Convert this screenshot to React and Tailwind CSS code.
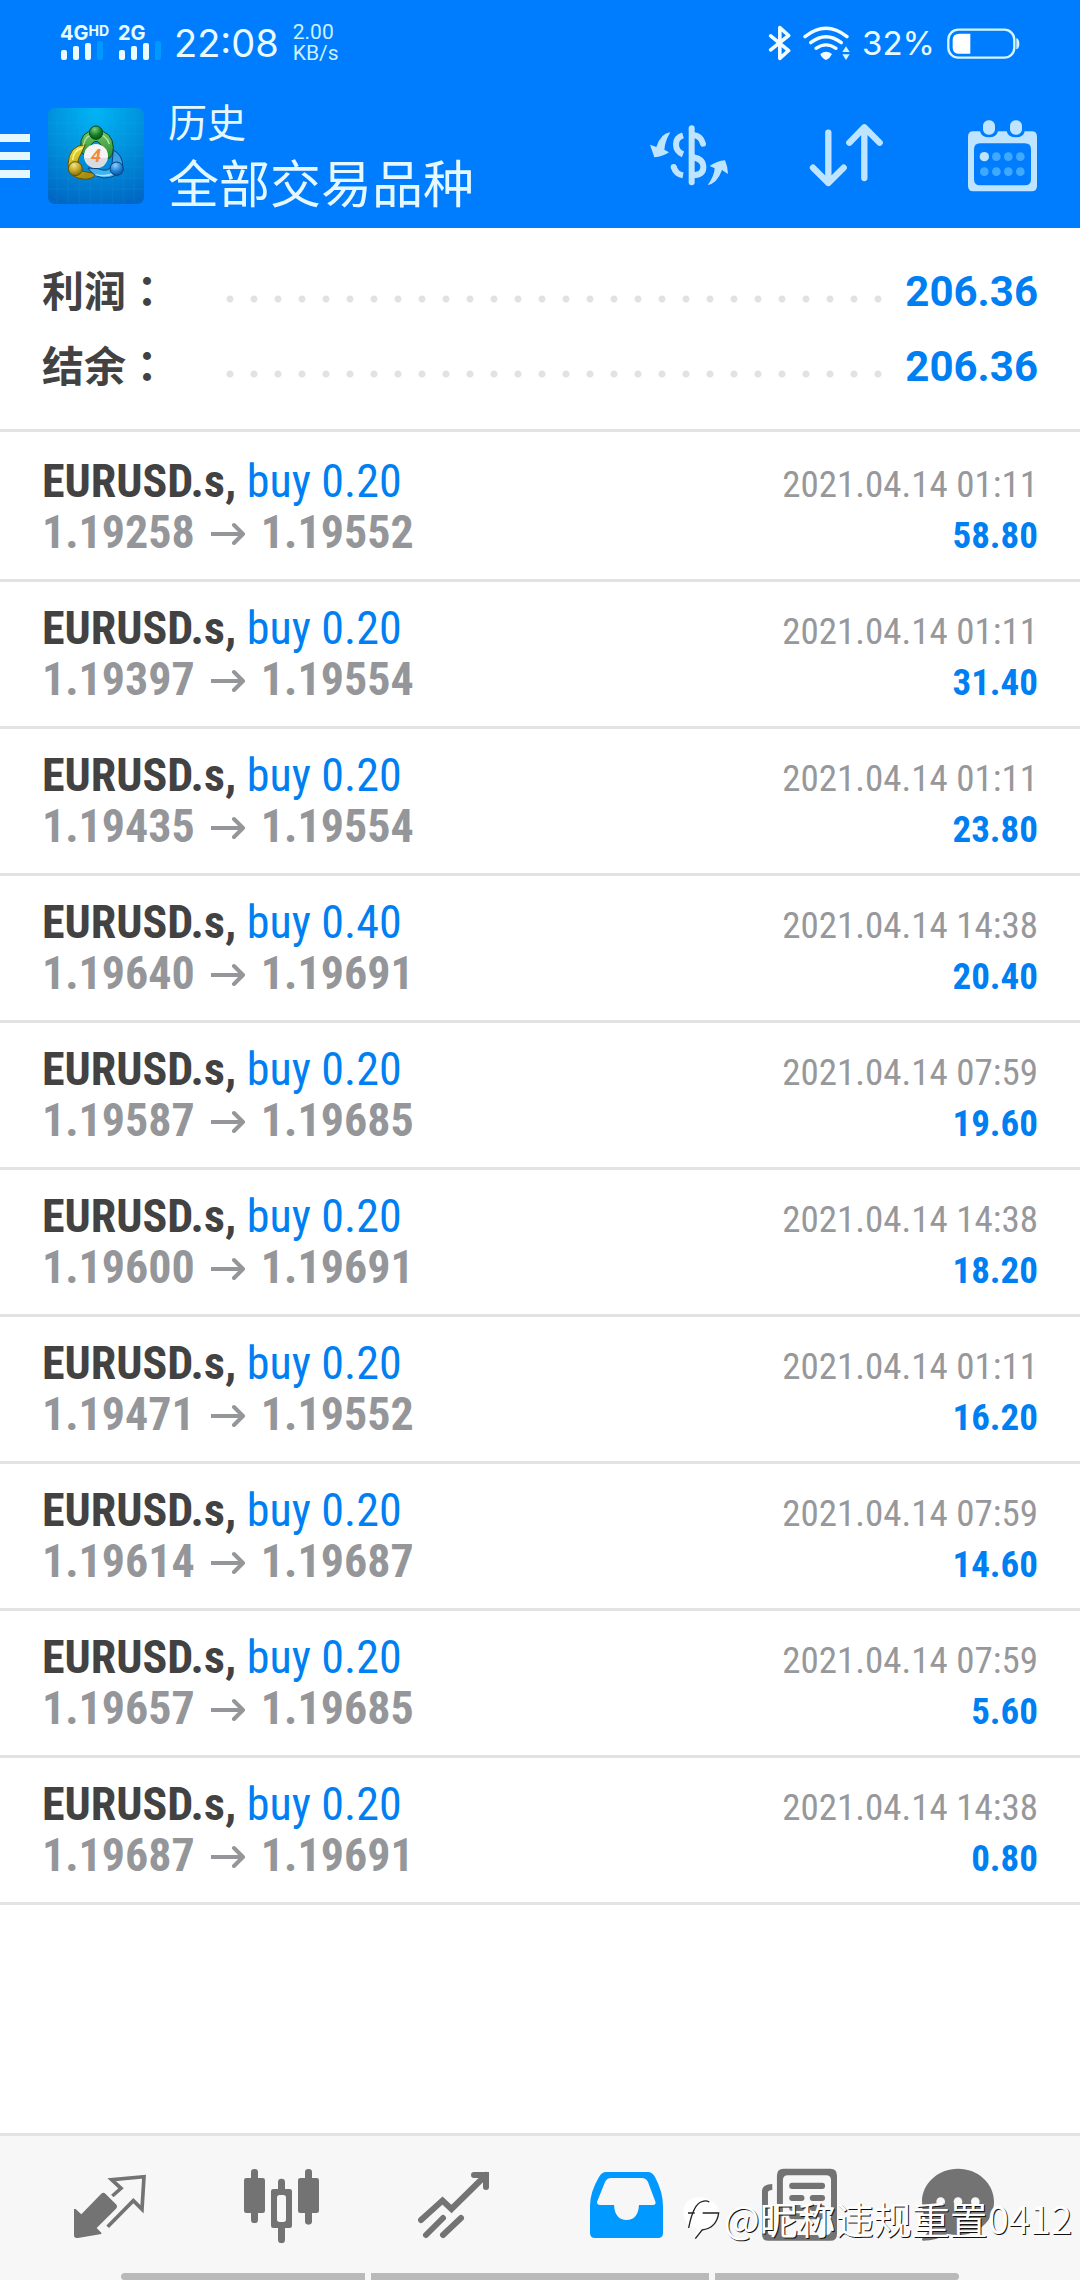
const SUMMARY = [
  { label: '利润', value: '206.36' },
  { label: '结余', value: '206.36' },
];

const DEALS = [
  { symbol: 'EURUSD.s', side: 'buy', volume: '0.20', open: '1.19258', close: '1.19552', time: '2021.04.14 01:11', profit: '58.80' },
  { symbol: 'EURUSD.s', side: 'buy', volume: '0.20', open: '1.19397', close: '1.19554', time: '2021.04.14 01:11', profit: '31.40' },
  { symbol: 'EURUSD.s', side: 'buy', volume: '0.20', open: '1.19435', close: '1.19554', time: '2021.04.14 01:11', profit: '23.80' },
  { symbol: 'EURUSD.s', side: 'buy', volume: '0.40', open: '1.19640', close: '1.19691', time: '2021.04.14 14:38', profit: '20.40' },
  { symbol: 'EURUSD.s', side: 'buy', volume: '0.20', open: '1.19587', close: '1.19685', time: '2021.04.14 07:59', profit: '19.60' },
  { symbol: 'EURUSD.s', side: 'buy', volume: '0.20', open: '1.19600', close: '1.19691', time: '2021.04.14 14:38', profit: '18.20' },
  { symbol: 'EURUSD.s', side: 'buy', volume: '0.20', open: '1.19471', close: '1.19552', time: '2021.04.14 01:11', profit: '16.20' },
  { symbol: 'EURUSD.s', side: 'buy', volume: '0.20', open: '1.19614', close: '1.19687', time: '2021.04.14 07:59', profit: '14.60' },
  { symbol: 'EURUSD.s', side: 'buy', volume: '0.20', open: '1.19657', close: '1.19685', time: '2021.04.14 07:59', profit: '5.60' },
  { symbol: 'EURUSD.s', side: 'buy', volume: '0.20', open: '1.19687', close: '1.19691', time: '2021.04.14 14:38', profit: '0.80' },
];

/* ---------- Status bar ---------- */

function SignalBars() {
  return (
    <svg viewBox="0 0 44 20" className="w-11 h-5" aria-hidden="true">
      <rect x="1" y="9" width="6" height="10" rx="2" fill="#e9fbff" />
      <rect x="13" y="5" width="6" height="14" rx="2" fill="#e9fbff" />
      <rect x="25" y="2" width="6" height="17" rx="2" fill="#e9fbff" />
      <rect x="37" y="0" width="6" height="19" rx="2" fill="#0099ff" />
    </svg>
  );
}

function BluetoothIcon() {
  return (
    <svg viewBox="448 72 70 110" className="w-[23px] h-9" fill="none" stroke="#f2fdff" strokeWidth="11" strokeLinecap="round" strokeLinejoin="round" aria-hidden="true">
      <path d="M456 105 L511 150 L484 174 V80 L511 104 L456 148" />
    </svg>
  );
}

function WifiIcon() {
  return (
    <svg viewBox="556 72 141 105" className="w-[47px] h-[35px]" fill="none" stroke="#f2fdff" strokeWidth="10" strokeLinecap="round" aria-hidden="true">
      <path d="M562 104 Q625 54 688 104" />
      <path d="M579 122 Q625 86 671 122" />
      <path d="M595 139 Q625 118 655 139" />
      <path d="M608 156 Q625 142 643 156 Q638 168 625 174 Q612 168 608 156Z" fill="#f2fdff" stroke="none" />
      <path d="M674 150 L685 133 L696 150Z M674 157 L685 174 L696 157Z" fill="#d5f6ff" stroke="none" />
    </svg>
  );
}

function BatteryIcon() {
  return (
    <svg viewBox="983 79 219 93" className="w-[73px] h-[31px]" aria-hidden="true">
      <rect x="987" y="84" width="198" height="84" rx="30" fill="none" stroke="#d5f6ff" strokeWidth="7" />
      <path d="M1020 96 H1053 V156 H1020 Q1000 156 1000 138 V114 Q1000 96 1020 96Z" fill="#fff" />
      <path d="M1191 109 Q1200 112 1200 126 Q1200 140 1191 143Z" fill="#d5f6ff" />
    </svg>
  );
}

function StatusBar() {
  return (
    <div className="flex items-center justify-between h-[84px] px-[60px] pt-0.5 text-[#e9fbff] font-['Inter','Roboto',sans-serif]">
      <div className="flex items-center">
        <div className="flex gap-2 font-bold text-[20px] leading-4">
          <div className="flex flex-col w-[50px]">
            <span className="flex items-start">4G<span className="text-[14px] leading-3">HD</span></span>
            <SignalBars />
          </div>
          <div className="flex flex-col">
            <span>2G</span>
            <SignalBars />
          </div>
        </div>
        <span className="ml-3 text-[38px] leading-10">22:08</span>
        <div className="ml-[14px] flex flex-col text-[21px] leading-[21px] text-[#c9f2ff] font-['Roboto',sans-serif]">
          <span>2.00</span>
          <span>KB/s</span>
        </div>
      </div>
      <div className="flex items-center gap-3">
        <BluetoothIcon />
        <WifiIcon />
        <span className="text-[33px] leading-10">32%</span>
        <BatteryIcon />
      </div>
    </div>
  );
}

/* ---------- App bar ---------- */

function AppLogo() {
  return (
    <svg viewBox="0 0 288 288" className="w-24 h-24 shrink-0" role="img" aria-label="MetaTrader 4">
      <defs>
        <radialGradient id="logoBg" cx="0.5" cy="0.05" r="1">
          <stop offset="0" stopColor="#00b4f5" />
          <stop offset="0.5" stopColor="#0090dc" />
          <stop offset="1" stopColor="#0068c4" />
        </radialGradient>
        <linearGradient id="logoGreen" x1="0" y1="0" x2="0" y2="1">
          <stop offset="0" stopColor="#7cc86a" />
          <stop offset="1" stopColor="#1f8a2c" />
        </linearGradient>
        <linearGradient id="logoYellow" x1="0" y1="0" x2="0.4" y2="1">
          <stop offset="0" stopColor="#f4ea3c" />
          <stop offset="1" stopColor="#a88d10" />
        </linearGradient>
        <linearGradient id="logoBlue" x1="0" y1="0" x2="0" y2="1">
          <stop offset="0" stopColor="#3a9ae0" />
          <stop offset="1" stopColor="#45b8f4" />
        </linearGradient>
        <radialGradient id="ballGreen" cx="0.4" cy="0.25" r="0.8">
          <stop offset="0" stopColor="#7fce7c" />
          <stop offset="0.6" stopColor="#127a24" />
          <stop offset="1" stopColor="#0a5516" />
        </radialGradient>
        <radialGradient id="ballYellow" cx="0.4" cy="0.25" r="0.8">
          <stop offset="0" stopColor="#f5e682" />
          <stop offset="0.6" stopColor="#b89a1c" />
          <stop offset="1" stopColor="#7d6506" />
        </radialGradient>
        <radialGradient id="ballBlue" cx="0.4" cy="0.25" r="0.8">
          <stop offset="0" stopColor="#8ed0fa" />
          <stop offset="0.6" stopColor="#1a7bd0" />
          <stop offset="1" stopColor="#0a549e" />
        </radialGradient>
      </defs>
      <rect width="288" height="288" rx="20" fill="url(#logoBg)" />
      <path d="M28 0V288M61 0V288M94 0V288M127 0V288M160 0V288M193 0V288M226 0V288M259 0V288M0 45H288M0 78H288M0 111H288M0 144H288M0 177H288M0 210H288M0 243H288" stroke="#3cc0f0" strokeOpacity="0.16" strokeWidth="2" />
      <g strokeLinejoin="round">
        <path d="M98 118 Q94 70 144 66 Q194 70 196 118 Q196 150 178 152 L160 112 Q144 88 128 112 L110 140 Q98 138 98 118Z" fill="url(#logoGreen)" stroke="#064a22" strokeWidth="3" />
        <path d="M112 110 Q62 112 60 170 Q62 212 112 214 Q146 210 140 196 L104 190 Q82 180 92 152Z" fill="url(#logoYellow)" stroke="#5f5206" strokeWidth="3" />
        <path d="M196 126 Q226 142 224 178 Q214 208 168 210 Q136 206 120 180 L150 182 Q186 196 192 168Z" fill="url(#logoBlue)" stroke="#06427f" strokeWidth="3" />
        <path d="M106 112 Q112 80 144 76 Q176 80 184 108" fill="none" stroke="#b6e6a0" strokeWidth="4" />
        <path d="M74 156 Q76 126 104 120" fill="none" stroke="#fdf8a0" strokeWidth="4" />
        <path d="M142 200 Q174 208 206 194" fill="none" stroke="#a8e2ff" strokeWidth="4" />
      </g>
      <circle cx="144" cy="74" r="20" fill="url(#ballGreen)" stroke="#064a22" strokeWidth="3" />
      <circle cx="82" cy="182" r="21" fill="url(#ballYellow)" stroke="#5f5206" strokeWidth="3" />
      <circle cx="206" cy="182" r="20" fill="url(#ballBlue)" stroke="#06427f" strokeWidth="3" />
      <circle cx="144" cy="144" r="36" fill="#f4f4f6" />
      <path d="M110 150 H178 Q174 180 144 180 Q114 178 110 150Z" fill="#d9dde2" />
      <text x="144" y="163" textAnchor="middle" fontFamily="Roboto, sans-serif" fontStyle="italic" fontWeight="700" fontSize="56" fill="#f58a3c">4</text>
    </svg>
  );
}

function CurrencyIcon() {
  return (
    <svg viewBox="33 56 237 186" className="w-[79px] h-[62px]" fill="none" stroke="#bfe4ff" strokeWidth="18" strokeLinecap="round" aria-hidden="true">
      <path d="M158 66 V228" />
      <path d="M132 87 Q111 93 111 114 Q111 136 132 144" strokeLinecap="butt" />
      <path d="M104 181 Q110 203 132 207" strokeLinecap="butt" />
      <circle cx="104" cy="182" r="9" fill="#bfe4ff" stroke="none" />
      <path d="M162 86 Q186 88 192 112" />
      <path d="M162 153 Q193 158 193 183 Q193 206 162 207" />
      <path d="M94 78 Q66 80 52 122 L33 115 Q40 134 46 153 Q70 152 90 138 L76 130 Q78 104 94 78Z" fill="#bfe4ff" stroke="none" />
      <path d="M206 236 Q234 232 249 191 L267 203 Q266 180 258 162 Q234 164 212 179 L227 186 Q226 210 206 236Z" fill="#bfe4ff" stroke="none" />
    </svg>
  );
}

function SortIcon() {
  return (
    <svg viewBox="566 370 237 198" className="w-[79px] h-[66px]" fill="none" stroke="#bfe4ff" strokeWidth="19" strokeLinecap="round" strokeLinejoin="round" aria-hidden="true">
      <path d="M624 399 V550 M578 504 L624 550 L670 504" />
      <path d="M732 535 V383 M687 429 L732 383 L778 429" />
    </svg>
  );
}

function CalendarIcon() {
  return (
    <svg viewBox="1044 356 207 219" className="w-[69px] h-[73px]" aria-hidden="true">
      <path
        fillRule="evenodd"
        fill="#bfe4ff"
        d="M1060 390 H1080 Q1084 408 1107 408 Q1130 408 1134 390 H1160 Q1164 408 1188 408 Q1211 408 1214 390 H1235 Q1251 390 1251 406 V554 Q1251 570 1235 570 H1060 Q1044 570 1044 554 V406 Q1044 390 1060 390Z M1080 426 Q1062 426 1062 444 V534 Q1062 552 1080 552 H1215 Q1233 552 1233 534 V444 Q1233 426 1215 426Z"
      />
      <rect x="1089" y="357" width="36" height="43" rx="16" fill="#bfe4ff" />
      <rect x="1170" y="357" width="36" height="43" rx="16" fill="#bfe4ff" />
      <circle cx="1093" cy="466" r="14" fill="#bfe4ff" />
      <g fill="#3fa9ff">
        <circle cx="1129" cy="466" r="13" />
        <circle cx="1165" cy="466" r="13" />
        <circle cx="1201" cy="466" r="13" />
        <circle cx="1093" cy="511" r="13" />
        <circle cx="1129" cy="511" r="13" />
        <circle cx="1165" cy="511" r="13" />
        <circle cx="1201" cy="511" r="13" />
      </g>
    </svg>
  );
}

function AppBar() {
  return (
    <div className="flex items-center h-36 pr-[43px]">
      <button type="button" aria-label="菜单" className="flex flex-col gap-[10px] w-[30px] mr-[18px]">
        <span className="h-2 bg-[#e6f8ff]" />
        <span className="h-2 bg-[#e6f8ff]" />
        <span className="h-2 bg-[#e6f8ff]" />
      </button>
      <AppLogo />
      <div className="flex flex-col flex-1 ml-6 pb-0.5 text-[#e6f8ff] font-['Noto_Sans_CJK_SC',sans-serif]">
        <span className="text-[39px] leading-[52px]">历史</span>
        <h1 className="text-[51px] leading-[70px]">全部交易品种</h1>
      </div>
      <div className="flex items-center gap-20">
        <button type="button" aria-label="交易品种"><CurrencyIcon /></button>
        <button type="button" aria-label="排序"><SortIcon /></button>
        <button type="button" aria-label="日期"><CalendarIcon /></button>
      </div>
    </div>
  );
}

/* ---------- History ---------- */

function SummaryRow({ label, value }) {
  return (
    <div className="flex items-center h-[75px]">
      <dt className="w-[176px] pb-1.5 text-[42px] leading-[50px] font-bold text-[#424242] font-['Noto_Sans_CJK_SC',sans-serif]">
        {label}<span className="font-['Noto_Sans_CJK_TC',sans-serif]">：</span>
      </dt>
      <dd className="flex flex-1 items-center">
        <span className="flex-1 mt-[14px] mr-4 h-2 bg-[radial-gradient(circle,#e2e2e2_3px,transparent_4px)] bg-[length:24px_8px] bg-repeat-x" />
        <span className="text-[42px] leading-[50px] font-bold text-[#007ff2]">{value}</span>
      </dd>
    </div>
  );
}

function PriceArrow() {
  return (
    <svg viewBox="0 0 34 24" className="w-[34px] h-6 mx-4" fill="none" stroke="#959699" strokeWidth="4" aria-hidden="true">
      <path d="M0 13 H30" />
      <path d="M23 4 L32 13 L23 22" strokeLinecap="round" strokeLinejoin="round" />
    </svg>
  );
}

function DealRow({ deal }) {
  return (
    <li className="px-[42px] py-[21px] border-b-3 border-[#e3e3e3] font-['Roboto_Condensed','Roboto',sans-serif]">
      <div className="flex items-baseline justify-between h-[51px] leading-[51px]">
        <span className="text-[46px] text-[#007ff2]">
          <b className="font-bold text-[#424242]">{deal.symbol},</b> {deal.side} {deal.volume}
        </span>
        <time className="text-[37px] text-[#97989b]">{deal.time}</time>
      </div>
      <div className="flex items-baseline justify-between h-[51px] leading-[51px] font-bold">
        <span className="flex items-center text-[46px] text-[#959699]">
          {deal.open}
          <PriceArrow />
          {deal.close}
        </span>
        <span className="text-[37px] text-[#007ff2]">{deal.profit}</span>
      </div>
    </li>
  );
}

/* ---------- Bottom navigation ---------- */

function QuotesIcon() {
  return (
    <svg viewBox="42 24 216 228" className="w-[72px] h-[76px]" aria-hidden="true">
      <path d="M42 147 H47 L64 163 L123 102 Q130 95 137 102 L168 133 Q174 139 168 146 L110 204 L124 218 V222 L54 234 Q42 236 42 226Z" fill="#737373" />
      <path d="M157 108 L183 85 L155 59 L252 50 L246 148 L220 122 L143 200" fill="none" stroke="#737373" strokeWidth="11" />
    </svg>
  );
}

function ChartIcon() {
  return (
    <svg viewBox="552 24 228 228" className="w-[76px] h-[76px]" fill="#737373" aria-hidden="true">
      <rect x="552" y="54" width="63" height="105" rx="7" />
      <rect x="573" y="27" width="21" height="162" rx="10" />
      <rect x="714" y="54" width="63" height="105" rx="7" />
      <rect x="735" y="27" width="21" height="167" rx="10" />
      <rect x="654" y="56" width="21" height="40" rx="10" />
      <rect x="654" y="195" width="21" height="54" rx="10" />
      <path fillRule="evenodd" d="M640 87 H689 Q696 87 696 94 V197 Q696 204 689 204 H640 Q633 204 633 197 V94 Q633 87 640 87Z M659 105 Q651 105 651 113 V178 Q651 186 659 186 H670 Q678 186 678 178 V113 Q678 105 670 105Z" />
    </svg>
  );
}

function TradeIcon() {
  return (
    <svg viewBox="418 48 72 76" className="w-[72px] h-[76px]" fill="none" stroke="#737373" strokeWidth="6" strokeLinecap="round" aria-hidden="true">
      <path d="M421 100 L442.500 80.500 L451.500 89 L486 55" />
      <path d="M474 55 H486 V67" />
      <path d="M443 98 L426 115 M461 98 L443 115" />
    </svg>
  );
}

function HistoryIcon() {
  return (
    <svg viewBox="50 48 73 76" className="w-[73px] h-[76px]" aria-hidden="true">
      <path
        fillRule="evenodd"
        fill="#0099ff"
        d="M66 52 H108 Q112 52 115 57 Q123 72 123 86 V113 Q123 118 118 118 H55 Q50 118 50 113 V86 Q50 72 59 57 Q62 52 66 52Z M71 58 Q67 58 65 62 L57 82 Q57 85 60 85 H74 Q75 100 86.500 100 Q98 100 99 85 H113 Q116 85 115.500 82 L108 62 Q106 58 102 58Z"
      />
    </svg>
  );
}

function NewsIcon() {
  return (
    <svg viewBox="271 54 232 228" className="w-[77px] h-[76px]" fill="#737373" aria-hidden="true">
      <path fillRule="evenodd" d="M342 56 H483 Q503 56 503 76 V253 Q503 273 483 273 H297 Q277 273 277 253 V122 Q279 102 308 102 V120 Q295 120 295 128 V246 Q295 255 304 255 Q322 255 322 240 V76 Q322 56 342 56Z M355 75 Q340 75 340 90 V240 Q340 255 355 255 H470 Q485 255 485 240 V90 Q485 75 470 75Z" />
      <rect x="359" y="98" width="108" height="19" rx="9" />
      <rect x="359" y="135" width="46" height="18" rx="9" />
      <rect x="421" y="135" width="46" height="18" rx="9" />
      <rect x="359" y="165" width="46" height="18" rx="9" />
      <rect x="421" y="165" width="46" height="18" rx="9" />
      <rect x="359" y="190" width="108" height="18" rx="9" />
    </svg>
  );
}

function MessagesIcon() {
  return (
    <svg viewBox="187 54 288 228" className="w-24 h-[76px]" aria-hidden="true">
      <path d="M295 56 C355 56 403 100 403 155 C403 212 355 255 295 255 Q278 255 264 251 Q230 272 190 272 Q184 270 190 263 Q206 250 210 229 Q187 200 187 155 C187 100 236 56 295 56Z" fill="#737373" />
      <circle cx="243" cy="155" r="13" fill="#f7f7f7" />
      <circle cx="295" cy="155" r="13" fill="#f7f7f7" />
      <circle cx="347" cy="155" r="13" fill="#f7f7f7" />
    </svg>
  );
}

const TABS = [
  { label: '行情', Icon: QuotesIcon },
  { label: '图表', Icon: ChartIcon },
  { label: '交易', Icon: TradeIcon },
  { label: '历史', Icon: HistoryIcon },
  { label: '新闻', Icon: NewsIcon },
  { label: '消息', Icon: MessagesIcon },
];

function Watermark() {
  return (
    <div className="absolute right-2 bottom-9 flex items-center gap-1 pointer-events-none">
      <svg viewBox="36 150 114 132" className="w-[38px] h-11" aria-hidden="true">
        <path d="M48 170 Q74 148 104 156 Q146 168 147 204 Q146 242 96 252 L76 278 L80 246 Q44 240 40 204 Q40 184 48 170Z" fill="#fff" />
        <path d="M56 246 Q70 172 98 166 Q108 162 118 168 M54 201 H74 M98 201 H146 Q140 246 96 252 L76 278" fill="none" stroke="#222" strokeWidth="4" />
      </svg>
      <span className="text-[38px] leading-[52px] text-white font-['Noto_Sans_CJK_SC',sans-serif] [text-shadow:1px_1px_0_#111]">@昵称违规重置0412</span>
    </div>
  );
}

function BottomNav() {
  return (
    <nav className="relative mt-auto border-t-3 border-[#e3e3e3] bg-[#f7f7f7]">
      <div className="flex px-6 pt-8">
        {TABS.map(({ label, Icon }) => (
          <button key={label} type="button" aria-label={label} className="flex flex-1 justify-center">
            <Icon />
          </button>
        ))}
      </div>
      <div className="flex gap-[6px] mt-[29px] px-[121px]">
        <span className="flex-1 h-[7px] rounded-l-full bg-[#bababa]" />
        <span className="flex-[1.385] h-[7px] bg-[#bababa]" />
        <span className="flex-1 h-[7px] rounded-r-full bg-[#bababa]" />
      </div>
      <Watermark />
    </nav>
  );
}

export default function App() {
  return (
    <div className="flex flex-col min-h-screen bg-white font-['Roboto','Noto_Sans_CJK_SC',sans-serif]">
      <header className="bg-[#007dff]">
        <StatusBar />
        <AppBar />
      </header>
      <main>
        <dl className="px-[42px] pt-[26px] pb-[25px] border-b-3 border-[#e3e3e3]">
          {SUMMARY.map((row) => (
            <SummaryRow key={row.label} label={row.label} value={row.value} />
          ))}
        </dl>
        <ul className="pt-[3px]">
          {DEALS.map((deal) => (
            <DealRow key={deal.open} deal={deal} />
          ))}
        </ul>
      </main>
      <BottomNav />
    </div>
  );
}
